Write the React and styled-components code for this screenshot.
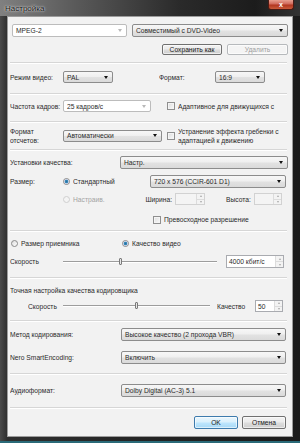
import React from 'react';
import styled, { createGlobalStyle } from 'styled-components';

const Global = createGlobalStyle`
  html, body { margin: 0; padding: 0; background: #1f5c6b; }
  body { font-family: "Liberation Sans", Arial, sans-serif; }
  * { box-sizing: border-box; }
`;

const Window = styled.div`
  width: 300px;
  height: 443px;
  display: flex;
  flex-direction: column;
  background: linear-gradient(to right, #4a4a4a 0px, #2f2f2f 7px, #262626 40%, #1b1b1b 100%);
  border-bottom: 2px solid #2a6a78;
  overflow: hidden;
`;

const TitleBar = styled.div`
  height: 16px;
  flex-shrink: 0;
  display: flex;
  align-items: flex-start;
  justify-content: space-between;
  background: linear-gradient(to right, #808080 0%, #5a5a5a 25%, #2a2a2a 60%, #1c1c1c 85%, #333 100%);
`;

const Title = styled.span`
  margin: 4px 0 0 5px;
  font-size: 8px;
  color: #0c0c0c;
  text-shadow: 0 0 3px rgba(255, 255, 255, 0.85), 0 0 1px rgba(255, 255, 255, 0.9);
`;

const CloseBtn = styled.div`
  width: 26px;
  height: 10px;
  margin-right: 6px;
  border: 1px solid #4a1a14;
  border-top: none;
  border-radius: 0 0 3px 3px;
  background: linear-gradient(#e8a090 0%, #d0685a 45%, #b23620 55%, #c85a3a 100%);
  display: flex;
  align-items: center;
  justify-content: center;
  color: #fff;
  font-size: 7px;
  font-weight: bold;
  line-height: 1;
`;

const Body = styled.div`
  flex: 1;
  display: flex;
  padding: 0 7px 4px 7px;
`;

const Client = styled.div`
  flex: 1;
  display: flex;
  flex-direction: column;
  background: #f2f2f2;
  border: 1px solid #9c9c9c;
  font-size: 6.7px;
  color: #2a2a2a;
`;

const Row = styled.div`
  display: flex;
  align-items: center;
  flex-shrink: 0;
  height: ${p => p.$h}px;
  margin-top: ${p => p.$mt}px;
  padding-left: ${p => p.$pl ?? 2}px;
  padding-right: ${p => p.$pr ?? 0}px;
  justify-content: ${p => (p.$end ? 'flex-end' : 'flex-start')};
`;

const Sep = styled.div`
  flex-shrink: 0;
  height: 2px;
  margin: ${p => p.$mt}px 5px 0 2px;
  border-top: 1px solid #d6d6d6;
  border-bottom: 1px solid #ffffff;
`;

const Label = styled.span`
  flex-shrink: 0;
  width: ${p => (p.$w ? `${p.$w}px` : 'auto')};
  margin-left: ${p => p.$ml || 0}px;
  text-align: ${p => (p.$right ? 'right' : 'left')};
  line-height: 9px;
  white-space: ${p => (p.$wrap ? 'normal' : 'nowrap')};
  color: ${p => (p.$dim ? '#a3a3a3' : '#2a2a2a')};
  overflow: hidden;
`;

const SelectBox = styled.div`
  flex-shrink: 0;
  width: ${p => p.$w}px;
  height: ${p => p.$h || 13}px;
  margin-left: ${p => p.$ml || 0}px;
  border: 1px solid ${p => (p.$edit ? '#bcbcbc' : '#8c8c8c')};
  border-radius: 2px;
  background: ${p =>
    p.$edit ? '#ffffff' : 'linear-gradient(#f7f7f7 0%, #efefef 48%, #e2e2e2 52%, #dadada 100%)'};
  display: flex;
  align-items: center;
  padding-left: 3px;
  white-space: nowrap;
  overflow: hidden;
`;

const Arrow = styled.span`
  margin-left: auto;
  margin-right: 4px;
  width: 0;
  height: 0;
  border-left: 2.5px solid transparent;
  border-right: 2.5px solid transparent;
  border-top: 3px solid ${p => (p.$dim ? '#b8b8b8' : '#111')};
`;

const Button = styled.div`
  flex-shrink: 0;
  width: ${p => p.$w}px;
  height: ${p => p.$h || 11}px;
  margin-left: ${p => p.$ml || 0}px;
  border: 1px solid ${p => (p.$disabled ? '#b6b9bc' : p.$def ? '#3d7bad' : '#707070')};
  border-radius: 2px;
  background: ${p =>
    p.$disabled
      ? '#f4f4f4'
      : p.$def
      ? 'linear-gradient(#eaf6fd 0%, #d9f0fc 48%, #bee6fd 52%, #a7d9f5 100%)'
      : 'linear-gradient(#f2f2f2 0%, #ebebeb 48%, #dddddd 52%, #cfcfcf 100%)'};
  color: ${p => (p.$disabled ? '#a0a0a0' : '#1a1a1a')};
  display: flex;
  align-items: center;
  justify-content: center;
  box-shadow: inset 0 0 0 1px rgba(255, 255, 255, 0.6);
`;

const Check = styled.span`
  flex-shrink: 0;
  width: 8px;
  height: 8px;
  margin-left: ${p => p.$ml || 0}px;
  border: 1px solid #8f8f8f;
  background: linear-gradient(135deg, #dcdcdc, #fbfbfb);
  box-shadow: inset 0 0 0 1px #f4f4f4;
`;

const Radio = styled.span`
  flex-shrink: 0;
  width: 7px;
  height: 7px;
  margin-left: ${p => p.$ml || 0}px;
  border-radius: 50%;
  border: 1px solid ${p => (p.$dim ? '#cfcfcf' : '#8a8a8a')};
  background: ${p =>
    p.$on
      ? 'radial-gradient(circle, #2a6f9a 0, #3c8ec0 1.6px, #eef 2.2px, #e6e6e6 100%)'
      : p.$dim
      ? '#f4f4f4'
      : 'linear-gradient(135deg, #dcdcdc, #ffffff)'};
`;

const CheckText = styled.span`
  flex-shrink: 0;
  margin-left: 3px;
  width: ${p => p.$w}px;
  line-height: 9px;
  white-space: ${p => (p.$wrap ? 'normal' : 'nowrap')};
  overflow: hidden;
  color: ${p => (p.$dim ? '#a3a3a3' : '#2a2a2a')};
`;

const Option = styled.div`
  flex-shrink: 0;
  display: flex;
  align-items: center;
  width: ${p => p.$w}px;
  margin-left: ${p => p.$ml || 0}px;
`;

const Spin = styled.div`
  flex-shrink: 0;
  display: flex;
  width: ${p => p.$w}px;
  height: ${p => p.$h || 12}px;
  margin-left: ${p => p.$ml || 0}px;
  border: 1px solid ${p => (p.$dim ? '#d2d2d2' : '#a9abb0')};
  background: ${p => (p.$dim ? '#f4f4f4' : '#ffffff')};
`;

const SpinText = styled.span`
  flex: 1;
  display: flex;
  align-items: center;
  padding-left: 2px;
  white-space: nowrap;
  overflow: hidden;
`;

const SpinBtns = styled.div`
  width: 8px;
  display: flex;
  flex-direction: column;
  border-left: 1px solid #dcdcdc;
`;

const SpinHalf = styled.div`
  flex: 1;
  display: flex;
  align-items: center;
  justify-content: center;
  background: #f3f3f3;
  & + & {
    border-top: 1px solid #dcdcdc;
  }
`;

const Tri = styled.span`
  width: 0;
  height: 0;
  border-left: 1.5px solid transparent;
  border-right: 1.5px solid transparent;
  ${p => (p.$up ? 'border-bottom' : 'border-top')}: 2px solid #a8a8a8;
`;

const Slider = styled.div`
  flex-shrink: 0;
  position: relative;
  width: ${p => p.$w}px;
  height: 10px;
  margin-left: ${p => p.$ml || 0}px;
  display: flex;
  align-items: center;
`;

const Track = styled.div`
  width: 100%;
  height: 2px;
  border-top: 1px solid #9d9d9d;
  border-bottom: 1px solid #ffffff;
`;

const Thumb = styled.div`
  position: absolute;
  top: 1px;
  width: 3px;
  height: 7px;
  border: 1px solid #7a7a7a;
  border-radius: 1px;
  background: #e8e8e8;
`;

function Select({ w, h, ml, edit, children }) {
  return (
    <SelectBox $w={w} $h={h} $ml={ml} $edit={edit}>
      <span>{children}</span>
      <Arrow $dim={edit} />
    </SelectBox>
  );
}

function SpinBox({ w, h, ml, dim, children }) {
  return (
    <Spin $w={w} $h={h} $ml={ml} $dim={dim}>
      <SpinText>{children}</SpinText>
      <SpinBtns>
        <SpinHalf><Tri $up /></SpinHalf>
        <SpinHalf><Tri /></SpinHalf>
      </SpinBtns>
    </Spin>
  );
}

function Slide({ w, ml, pos }) {
  return (
    <Slider $w={w} $ml={ml}>
      <Track />
      <Thumb style={{ left: `${pos}px` }} />
    </Slider>
  );
}

export default function App() {
  return (
    <>
      <Global />
      <Window>
        <TitleBar>
          <Title>Настройка</Title>
          <CloseBtn>x</CloseBtn>
        </TitleBar>
        <Body>
          <Client>
            <Row $h={13} $mt={7} $pl={4}>
              <Select w={115} edit>MPEG-2</Select>
              <Select w={156} ml={5}>Совместимый с DVD-Video</Select>
            </Row>
            <Row $h={11} $mt={7} $end $pr={4}>
              <Button $w={60}>Сохранить как</Button>
              <Button $w={61} $ml={5} $disabled>Удалить</Button>
            </Row>
            <Sep $mt={7} />
            <Row $h={12} $mt={7}>
              <Label $w={53}>Режим видео:</Label>
              <Select w={50} h={12}>PAL</Select>
              <Label $w={56} $ml={46}>Формат:</Label>
              <Select w={50} h={12}>16:9</Select>
            </Row>
            <Sep $mt={10} />
            <Row $h={12} $mt={5}>
              <Label $w={53}>Частота кадров:</Label>
              <Select w={88} h={12} edit>25 кадров/с</Select>
              <Check $ml={16} />
              <CheckText $w={104}>Адаптивное для движущихся с</CheckText>
            </Row>
            <Sep $mt={9} />
            <Row $h={17} $mt={4}>
              <Label $w={53} $wrap>Формат<br />отсчетов:</Label>
              <Select w={99} h={12}>Автоматически</Select>
              <Check $ml={5} />
              <CheckText $w={112} $wrap>Устранение эффекта гребенки с адаптацией к движению</CheckText>
            </Row>
            <Sep $mt={5} />
            <Row $h={13} $mt={5}>
              <Label $w={110}>Установки качества:</Label>
              <Select w={168}>Настр.</Select>
            </Row>
            <Row $h={13} $mt={6}>
              <Label $w={53}>Размер:</Label>
              <Option $w={87}>
                <Radio $on />
                <CheckText $w={60}>Стандартный</CheckText>
              </Option>
              <Select w={136}>720 x 576 (CCIR-601 D1)</Select>
            </Row>
            <Row $h={12} $mt={5}>
              <Option $w={79} $ml={53}>
                <Radio $dim />
                <CheckText $w={50} $dim>Настраив.</CheckText>
              </Option>
              <Label $w={30} $right>Ширина:</Label>
              <SpinBox w={30} ml={3} dim />
              <Label $w={26} $ml={21}>Высота:</Label>
              <SpinBox w={28} ml={2} dim />
            </Row>
            <Row $h={9} $mt={10} $pl={145}>
              <Check />
              <CheckText $w={120}>Превосходное разрешение</CheckText>
            </Row>
            <Sep $mt={6} />
            <Row $h={10} $mt={6} $pl={3}>
              <Option $w={111}>
                <Radio />
                <CheckText $w={90}>Размер приемника</CheckText>
              </Option>
              <Option $w={80}>
                <Radio $on />
                <CheckText $w={70}>Качество видео</CheckText>
              </Option>
            </Row>
            <Row $h={13} $mt={7}>
              <Label $w={53}>Скорость</Label>
              <Slide w={154} pos={56} />
              <SpinBox w={58} h={13} ml={9}>4000 кбит/с</SpinBox>
            </Row>
            <Sep $mt={9} />
            <Row $h={10} $mt={6}>
              <Label>Точная настройка качества кодировщика</Label>
            </Row>
            <Row $h={12} $mt={5} $pl={20}>
              <Label $w={35}>Скорость</Label>
              <Slide w={147} pos={72} />
              <Label $w={38} $ml={7}>Качество</Label>
              <SpinBox w={28}>50</SpinBox>
            </Row>
            <Sep $mt={8} />
            <Row $h={13} $mt={6}>
              <Label $w={111}>Метод кодирования:</Label>
              <Select w={165}>Высокое качество (2 прохода VBR)</Select>
            </Row>
            <Row $h={13} $mt={10}>
              <Label $w={111}>Nero SmartEncoding:</Label>
              <Select w={165}>Включить</Select>
            </Row>
            <Sep $mt={9} />
            <Row $h={13} $mt={9}>
              <Label $w={111}>Аудиоформат:</Label>
              <Select w={165}>Dolby Digital (AC-3) 5.1</Select>
            </Row>
            <Sep $mt={10} />
            <Row $h={13} $mt={7} $end $pr={6}>
              <Button $w={44} $h={13} $def>OK</Button>
              <Button $w={44} $h={13} $ml={4}>Отмена</Button>
            </Row>
          </Client>
        </Body>
      </Window>
    </>
  );
}
